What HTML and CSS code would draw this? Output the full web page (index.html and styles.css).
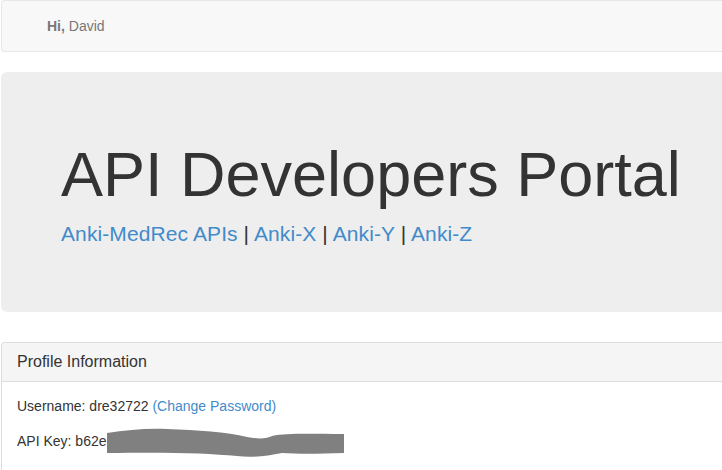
FILE: index.html
```html
<!DOCTYPE html>
<html>
<head>
<meta charset="utf-8">
<title>API Developers Portal</title>
<link rel="stylesheet" href="styles.css">
</head>
<body>
<div class="page">
  <nav class="navbar">
    <p class="navbar-text"><strong>Hi,</strong> David</p>
  </nav>
  <div class="jumbotron">
    <h1>API Developers Portal</h1>
    <p class="lead-links"><a href="#">Anki-MedRec APIs</a> | <a href="#">Anki-X</a> | <a href="#">Anki-Y</a> | <a href="#">Anki-Z</a></p>
  </div>
  <div class="panel">
    <div class="panel-heading"><h3 class="panel-title">Profile Information</h3></div>
    <div class="panel-body">
      <p>Username: dre32722 <a href="#">(Change Password)</a></p>
      <p>API Key: b62e<svg class="redact" width="237" height="30" viewBox="0 0 237 30" aria-hidden="true"><path d="M0,6 C20,3 40,1 60,2 C90,3 120,5 140,10 C150,12 160,12 165,9 C180,6 200,7 237,7 L237,26 C210,27 190,27 175,26 C160,29 145,31 130,29 C100,26 60,25 0,26 Z" fill="#808080"/></svg></p>
    </div>
  </div>
</div>
</body>
</html>
```
FILE: styles.css
```css
html, body {
  margin: 0;
  padding: 0;
  overflow: hidden;
  background: #fff;
}
body {
  font-family: "Liberation Sans", Arial, sans-serif;
  font-size: 14px;
  line-height: 1.42857;
  color: #333;
}
a {
  color: #428bca;
  text-decoration: none;
}
.page {
  padding-left: 1px;
}
.navbar {
  min-height: 50px;
  background: #f8f8f8;
  border: 1px solid #e7e7e7;
  border-right: 0;
  border-radius: 4px 0 0 4px;
  margin-bottom: 20px;
}
.navbar-text {
  margin: 15px 0;
  padding-left: 45px;
  line-height: 20px;
  color: #777;
}
.jumbotron {
  background: #eee;
  border-radius: 6px 0 0 6px;
  padding: 48px 0 48px 60px;
  margin-bottom: 30px;
}
.jumbotron h1 {
  font-size: 63px;
  line-height: 1.1;
  font-weight: 500;
  margin: 20px 0 10px;
  color: #333;
  white-space: nowrap;
}
.lead-links {
  font-size: 21px;
  margin: 0 0 15px;
  line-height: 1.42857;
  letter-spacing: 0.1px;
}
.panel {
  background: #fff;
  border: 1px solid #ddd;
  border-right: 0;
  border-radius: 4px 0 0 4px;
}
.panel-heading {
  background: #f5f5f5;
  border-bottom: 1px solid #ddd;
  padding: 10px 15px;
  border-radius: 3px 0 0 0;
}
.panel-title {
  margin: 0;
  font-size: 16px;
  line-height: 1.1;
  font-weight: 500;
  color: #333;
}
.panel-body {
  padding: 15px;
}
.panel-body p {
  margin: 0 0 10px;
}
.redact {
  vertical-align: -11px;
}
```
